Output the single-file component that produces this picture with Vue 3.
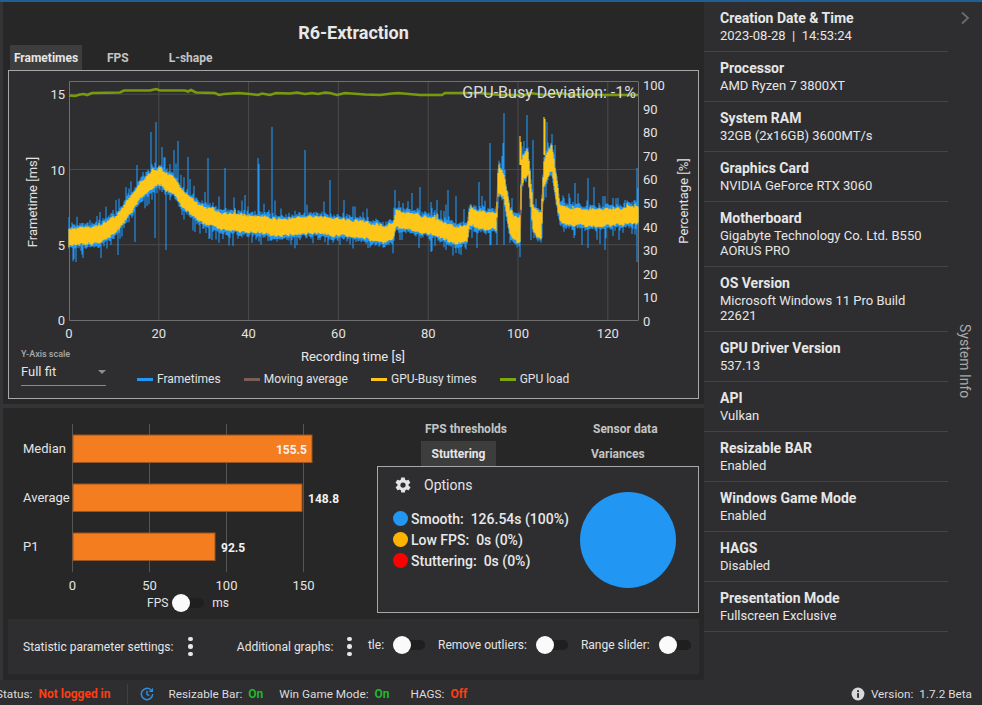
<script setup>
const keys = [[0,5.5],[5,5.6],[10,6.2],[13,7.4],[16,8.7],[20,9.6],[23,9.0],[26,7.9],[30,6.9],[35,6.5],[40,6.4],[45,6.2],[50,6.2],[55,6.3],[60,6.2],[65,6.0],[70,5.7],[72.3,5.9],[72.8,6.7],[78,6.4],[82,6.1],[86,5.6],[88.8,5.9],[89.2,6.9],[92,6.6],[95.2,6.6],[95.6,9.4],[96.8,9.0],[98.2,6.5],[99.8,6.0],[100.5,6.1],[100.8,9.8],[102.2,10.6],[103.4,6.6],[105.2,6.2],[105.7,9.6],[107.5,10.8],[109.4,7.0],[112,6.8],[126.5,6.9]]
function base(t) {
  for (let i = 1; i < keys.length; i++) {
    if (t <= keys[i][0]) {
      const [a, b] = keys[i - 1], [c, d] = keys[i]
      return b + (d - b) * (t - a) / (c - a)
    }
  }
  return 6.9
}
let seed = 12345
const rnd = () => { seed = (seed * 16807) % 2147483647; return seed / 2147483647 }
const Y = m => 320 - 15.05 * m
let blue = '', yellow = '', avg = []
const upSpikes = { 151:132,156:122,162:147,178:141,174:150,137:165,188:157,143:172,208:158,225:168,258:158,259:164,272:127,305:150,150:190,130:195,113:210,245:195,330:180,395:190,412:193,420:187,431:202,448:190,456:196,479:182,490:143,503:143,504:113,527:115,533:140,547:122,555:145,575:183,588:178,594:187,605:196,613:198,625:200,637:168 }
const downSpikes = { 76:262,101:258,118:255,135:242,155:238,166:250,195:232,212:240,230:238,262:235,300:240,320:240,340:245,368:248,389:245,400:240,419:248,431:252,446:250,477:248,491:245,497:245,504:245,510:243,531:240,574:238,582:245,588:248,600:244,605:250,619:240,637:262 }
let wob = 0
for (let x = 69; x <= 638; x++) {
  const t = (x - 69) / 4.49
  const c = base(t)
  wob = wob * 0.7 + (rnd() - 0.5) * 0.14
  const n = wob + (rnd() < 0.06 ? rnd() * 0.3 : 0)
  let h = 0.5 + rnd() * 0.12
  if (t > 95.4 && t < 109) h *= 1.5
  const yt = Y(c + h + n), yb = Y(c - h + wob)
  yellow += `M${x} ${yt.toFixed(1)}V${yb.toFixed(1)}`
  let bt = yt - 1 - rnd() * 4, bb = yb + 1 + rnd() * 4
  if (rnd() < 0.18) bt -= rnd() * 14
  if (rnd() < 0.18) bb += rnd() * 12
  if (upSpikes[x]) bt = upSpikes[x]
  if (downSpikes[x]) bb = downSpikes[x]
  blue += `M${x} ${bt.toFixed(1)}V${bb.toFixed(1)}`
  avg.push(`${x},${Y(c).toFixed(1)}`)
}
yellow += 'M520 165V136M521 165V142M544 155V117M545 155V119M161 182V167'
const greenKeys = [[69,95.5],[75,96],[80,94.5],[84,94],[87,95],[92,93],[120,92.5],[124,90.5],[150,90.5],[156,89],[160,90.5],[185,90.5],[188,91.5],[191,90],[196,92.5],[215,93],[219,95],[224,94],[238,93],[250,94],[258,95],[262,93.5],[270,95],[276,93],[290,93.5],[297,92.5],[305,94],[312,93],[318,94],[325,92.5],[330,93],[337,95],[345,93],[365,94.5],[380,95],[392,93.5],[398,93],[420,95],[442,95],[445,93],[480,93],[500,95],[525,95],[530,93],[545,95],[560,93],[572,95],[590,94],[600,95],[638,95]]
const green = greenKeys.map(p => p.join(',')).join(' ')
const gridX = [158.8, 248.6, 338.4, 428.2, 518, 607.8]
const gridY = [94.2, 169.5, 244.7]
const xLabels = [0, 20, 40, 60, 80, 100, 120]
const yLeft = [0, 5, 10, 15]
const yRight = [0, 10, 20, 30, 40, 50, 60, 70, 80, 90, 100]
const bars = [
  { label: 'Median', y: 435, w: 239, value: '155.5', inside: true },
  { label: 'Average', y: 484, w: 229, value: '148.8', inside: false },
  { label: 'P1', y: 533, w: 142, value: '92.5', inside: false },
]
const barTicks = [[72.5, '0'], [149.5, '50'], [226.5, '100'], [303.5, '150']]
const legend = [
  { c: '#2196f3', t: 'Frametimes' },
  { c: '#795f58', t: 'Moving average' },
  { c: '#fec619', t: 'GPU-Busy times' },
  { c: '#7da70e', t: 'GPU load' },
]
const info = [
  ['Creation Date & Time', '2023-08-28 \u00a0|\u00a0 14:53:24'],
  ['Processor', 'AMD Ryzen 7 3800XT'],
  ['System RAM', '32GB (2x16GB) 3600MT/s'],
  ['Graphics Card', 'NVIDIA GeForce RTX 3060'],
  ['Motherboard', 'Gigabyte Technology Co. Ltd. B550 AORUS PRO'],
  ['OS Version', 'Microsoft Windows 11 Pro Build 22621'],
  ['GPU Driver Version', '537.13'],
  ['API', 'Vulkan'],
  ['Resizable BAR', 'Enabled'],
  ['Windows Game Mode', 'Enabled'],
  ['HAGS', 'Disabled'],
  ['Presentation Mode', 'Fullscreen Exclusive'],
]
const stutter = [
  { c: '#2196f3', t: 'Smooth:\u00a0 126.54s (100%)' },
  { c: '#ffb300', t: 'Low FPS:\u00a0 0s (0%)' },
  { c: '#ff0000', t: 'Stuttering:\u00a0 0s (0%)' },
]
</script>

<template>
  <div class="app">
    <div class="topline"></div>
    <div class="body">
      <div class="edge"></div>
      <main class="main">
        <section class="upper">
          <h1 class="title">R6-Extraction</h1>
          <div class="tabs">
            <span class="tab active">Frametimes</span>
            <span class="tab fps">FPS</span>
            <span class="tab lshape">L-shape</span>
          </div>
          <div class="chartbox">
            <svg class="chart" width="690" height="275" viewBox="9 71 690 275">
              <g stroke="#4a4a4a" stroke-width="1">
                <path v-for="x in gridX" :key="x" :d="`M${x} 81V320`" />
                <path v-for="y in gridY" :key="y" :d="`M69 ${y}H638`" />
              </g>
              <path d="M69.5 81.5H638M69.5 81.5V320.5H638M638.5 81.5V320.5" fill="none" stroke="#6f6f6f" />
              <polyline :points="green" fill="none" stroke="#7a9a0c" stroke-width="2.6" />
              <path :d="blue" stroke="#2196f3" stroke-width="1.1" />
              <polyline :points="avg.join(' ')" fill="none" stroke="#795f58" stroke-width="2" />
              <path :d="yellow" stroke="#fec619" stroke-width="1.15" />
              <text x="636" y="98" text-anchor="end" class="dev">GPU-Busy Deviation: -1%</text>
              <g class="ax">
                <text v-for="m in yLeft" :key="m" x="65" :y="325 - 15.05 * m" text-anchor="end">{{ m }}</text>
                <text v-for="(l, i) in xLabels" :key="l" :x="69 + 89.8 * i" y="338" text-anchor="middle">{{ l }}</text>
                <text v-for="p in yRight" :key="p" x="643" :y="326 - 2.36 * p">{{ p }}</text>
                <text transform="translate(37 202) rotate(-90)" text-anchor="middle">Frametime [ms]</text>
                <text transform="translate(688 201) rotate(-90)" text-anchor="middle">Percentage [%]</text>
              </g>
            </svg>
            <div class="chartfoot">
              <div class="select">
                <div class="sel-label">Y-Axis scale</div>
                <div class="sel-row"><span>Full fit</span><i class="caret"></i></div>
              </div>
              <div class="foot-right">
                <div class="xtitle">Recording time [s]</div>
                <div class="legend">
                  <span v-for="l in legend" :key="l.t" class="leg">
                    <i :style="{ background: l.c }"></i>{{ l.t }}
                  </span>
                </div>
              </div>
            </div>
          </div>
        </section>
        <div class="divider"></div>
        <section class="lower">
          <div class="barcol">
            <svg class="barchart" width="366" height="184" viewBox="0 408 366 184">
              <g stroke="#555" stroke-width="1">
                <path v-for="t in barTicks" :key="t[1]" :d="`M${t[0]} 424V572`" />
              </g>
              <g v-for="b in bars" :key="b.label">
                <rect :x="73" :y="b.y" :width="b.w" height="27.5" fill="#f47d20" stroke="#9a5420" />
                <text x="23" :y="b.y + 18" class="barlabel">{{ b.label }}</text>
                <text v-if="b.inside" :x="73 + b.w - 5" :y="b.y + 19" text-anchor="end" class="barval">{{ b.value }}</text>
                <text v-else :x="73 + b.w + 6" :y="b.y + 19" class="barval">{{ b.value }}</text>
              </g>
              <text v-for="t in barTicks" :key="t[1]" :x="t[0]" y="590" text-anchor="middle" class="barlabel">{{ t[1] }}</text>
            </svg>
            <div class="unit">
              <span>FPS</span>
              <span class="toggle"><i></i></span>
              <span>ms</span>
            </div>
          </div>
          <div class="statcol">
            <div class="stattabs">
              <span class="st st1">FPS thresholds</span>
              <span class="st st2">Sensor data</span>
            </div>
            <div class="stattabs">
              <span class="st stactive">Stuttering</span>
              <span class="st st4">Variances</span>
            </div>
            <div class="statbox">
              <div class="statleft">
                <div class="options">
                  <svg width="18" height="18" viewBox="0 0 24 24"><path fill="#e4e4e4" d="M19.4 13a7.5 7.5 0 0 0 0-2l2.1-1.6a.5.5 0 0 0 .1-.7l-2-3.4a.5.5 0 0 0-.6-.2l-2.5 1a7.3 7.3 0 0 0-1.7-1l-.4-2.7a.5.5 0 0 0-.5-.4h-4a.5.5 0 0 0-.5.4l-.4 2.7a7.6 7.6 0 0 0-1.7 1l-2.5-1a.5.5 0 0 0-.6.2l-2 3.4a.5.5 0 0 0 .1.7L4.6 11a7.9 7.9 0 0 0 0 2l-2.1 1.6a.5.5 0 0 0-.1.7l2 3.4c.1.2.4.3.6.2l2.5-1c.5.4 1.1.8 1.7 1l.4 2.7c0 .2.2.4.5.4h4c.3 0 .5-.2.5-.4l.4-2.7c.6-.2 1.2-.6 1.7-1l2.5 1c.2.1.5 0 .6-.2l2-3.4a.5.5 0 0 0-.1-.7L19.4 13zM12 15.5a3.5 3.5 0 1 1 0-7 3.5 3.5 0 0 1 0 7z"/></svg>
                  <span>Options</span>
                </div>
                <div v-for="s in stutter" :key="s.t" class="stline">
                  <i :style="{ background: s.c }"></i>{{ s.t }}
                </div>
              </div>
              <div class="pie"></div>
            </div>
          </div>
        </section>
        <section class="params">
          <span class="plabel">Statistic parameter settings:</span>
          <span class="dots d1"><i></i><i></i><i></i></span>
          <span class="plabel add">Additional graphs:</span>
          <span class="dots d2"><i></i><i></i><i></i></span>
          <span class="plabel up clip">tle:</span>
          <span class="toggle up t1"><i></i></span>
          <span class="plabel up rem">Remove outliers:</span>
          <span class="toggle up t2"><i></i></span>
          <span class="plabel up ran">Range slider:</span>
          <span class="toggle up t2"><i></i></span>
        </section>
      </main>
      <aside class="side">
        <div class="sidelist">
          <div v-for="row in info" :key="row[0]" class="row">
            <div class="rt">{{ row[0] }}</div>
            <div class="rv">{{ row[1] }}</div>
          </div>
        </div>
        <div class="sidetab">
          <svg class="chev" width="10" height="14" viewBox="0 0 10 14"><path d="M2 1.5 8 7l-6 5.5" fill="none" stroke="#6b6b6b" stroke-width="1.8"/></svg>
          <span class="vert">System Info</span>
        </div>
      </aside>
    </div>
    <footer class="status">
      <span class="s-status">Status:</span>
      <b class="red login">Not logged in</b>
      <span class="sep"></span>
      <svg class="hist" width="16" height="16" viewBox="0 0 24 24"><path d="M20.5 12a8.5 8.5 0 1 1-3-6.5M12 7v5.5l3.5 2" fill="none" stroke="#2f8fe0" stroke-width="2.2"/><path d="M21 2.5V9h-6.5z" fill="#2f8fe0"/></svg>
      <span class="s-a">Resizable Bar:</span><b class="green">On</b>
      <span class="s-b">Win Game Mode:</span><b class="green">On</b>
      <span class="s-c">HAGS:</span><b class="red off">Off</b>
      <span class="grow"></span>
      <svg width="14" height="14" viewBox="0 0 24 24"><circle cx="12" cy="12" r="11" fill="#d8d8d8"/><rect x="10.5" y="10.5" width="3.2" height="8" fill="#2e2e30"/><rect x="10.5" y="5.5" width="3.2" height="3.2" fill="#2e2e30"/></svg>
      <span class="s-v">Version:</span><span class="s-n">1.7.2 Beta</span>
    </footer>
  </div>
</template>

<style>
html, body { margin: 0; background: #2e2e30; overflow: hidden; }
</style>

<style scoped>
.app {
  width: 982px; height: 705px; display: flex; flex-direction: column;
  font-family: Roboto, "Liberation Sans", sans-serif; color: #e4e4e4;
  background: #2e2e30; overflow: hidden;
}
.topline { height: 2px; background: #1f5f96; flex: none; }
.body { height: 678px; display: flex; flex: none; }
.edge { width: 3px; background: #343436; flex: none; }
.main { width: 701px; background: #272727; display: flex; flex-direction: column; flex: none; }
.upper { height: 402px; flex: none; }
.title { margin: 0; height: 43px; padding-top: 20px; box-sizing: border-box; line-height: 22px; text-align: center; font-size: 18px; font-weight: 700; color: #e8e8e8; width: 701px; }
.tabs { display: flex; height: 25px; padding-left: 7px; font-size: 12px; font-weight: 700; color: #c4c4c4; }
.tab { line-height: 27px; }
.tab.active { width: 72px; text-align: center; background: #3d3d3d; color: #e6e6e6; }
.fps { margin-left: 25px; }
.lshape { margin-left: 40px; }
.chartbox { margin-left: 5px; width: 689px; height: 327px; border: 1px solid #a8a8a8; background: #2e2e30; }
.chart { display: block; }
.dev { font-size: 16px; fill: #dcdcdc; }
.ax text { font-size: 13px; fill: #e2e2e2; }
.chartfoot { display: flex; height: 52px; }
.select { width: 85px; margin-left: 12px; flex: none; }
.sel-label { font-size: 9px; color: #a9a9a9; line-height: 11px; margin-top: 3px; font-weight: 500; }
.sel-row { display: flex; justify-content: space-between; align-items: center; font-size: 13px; border-bottom: 1px solid #8a8a8a; padding-bottom: 2px; box-sizing: border-box; height: 26px; }
.caret { width: 0; height: 0; border-left: 4px solid transparent; border-right: 4px solid transparent; border-top: 4px solid #8d8d8d; }
.foot-right { flex: 1; margin-left: 31px; }
.xtitle { font-size: 13px; line-height: 15px; text-align: center; width: 432px; margin-top: 3px; color: #e8e8e8; }
.legend { display: flex; font-size: 12px; margin-top: 7px; line-height: 16px; color: #e2e2e2; }
.leg { display: inline-flex; align-items: center; margin-right: 23px; white-space: nowrap; }
.leg i { width: 16px; height: 3px; margin-right: 4px; }
.divider { height: 4px; background: #343436; flex: none; }
.lower { height: 211px; display: flex; flex: none; }
.barcol { width: 377px; flex: none; margin-left: -3px; }
.barchart { display: block; }
.barlabel { font-size: 13px; fill: #e4e4e4; }
.barval { font-size: 12px; font-weight: 700; fill: #f2f2f2; }
.unit { display: flex; align-items: center; gap: 4px; font-size: 12px; height: 22px; padding-left: 147px; }
.unit span:last-child { margin-left: 4px; }
.toggle { width: 32px; height: 10px; background: #1f1f1f; border-radius: 5px; position: relative; display: inline-block; flex: none; }
.toggle i { position: absolute; left: 0; top: -4px; width: 18px; height: 18px; border-radius: 50%; background: #fafafa; }
.statcol { width: 322px; flex: none; padding-top: 8px; }
.stattabs { display: flex; height: 25px; font-size: 12px; font-weight: 700; color: #c4c4c4; line-height: 26px; }
.st { white-space: nowrap; }
.st1 { margin-left: 48px; }
.st2 { margin-left: 86px; }
.stactive { margin-left: 44px; width: 75px; text-align: center; background: #3d3d3d; color: #e6e6e6; }
.st4 { margin-left: 95px; }
.statbox { box-sizing: border-box; height: 147px; border: 1px solid #a8a8a8; background: #2e2e30; display: flex; }
.statleft { width: 203px; flex: none; padding: 9px 0 0 15px; box-sizing: border-box; }
.options { display: flex; align-items: center; gap: 12px; font-size: 14px; height: 18px; margin: 0 0 14px 1px; }
.stline { display: flex; align-items: center; height: 21px; font-size: 14px; font-weight: 500; white-space: nowrap; color: #e8e8e8; }
.stline i { width: 15px; height: 15px; border-radius: 50%; margin-right: 3px; flex: none; }
.pie { width: 96px; height: 96px; border-radius: 50%; background: #2196f3; margin: 25px 0 0 -1px; flex: none; }
.params { margin-left: 5px; width: 691px; height: 55px; flex: none; background: #2e2e30; display: flex; align-items: center; font-size: 12px; box-sizing: border-box; padding-left: 15px; white-space: nowrap; }
.dots { display: inline-flex; flex-direction: column; gap: 3px; }
.dots i { width: 4.5px; height: 4.5px; border-radius: 50%; background: #e8e8e8; }
.d1 { margin-left: 15px; }
.add { margin-left: 44px; }
.d2 { margin-left: 14px; }
.up { position: relative; top: -2px; }
.clip { margin-left: 16px; }
.t1 { margin-left: 9px; }
.t2 { margin-left: 9px; }
.rem { margin-left: 13px; }
.ran { margin-left: 13px; }
.side { flex: 1; display: flex; background: #2e2e30; }
.sidelist { width: 244px; flex: none; }
.row { padding: 7px 0 8px 16px; border-bottom: 1px solid #444446; }
.rt { font-size: 14px; font-weight: 700; line-height: 18px; color: #e6e6e6; }
.rv { font-size: 13px; line-height: 15px; color: #e6e6e6; width: 215px; margin-top: 1px; }
.sidetab { flex: 1; display: flex; flex-direction: column; align-items: center; }
.chev { margin-top: 9px; }
.vert { writing-mode: vertical-rl; font-size: 14px; color: #a9a9a9; margin-top: 299px; }
.status { height: 25px; flex: none; display: flex; align-items: center; font-size: 11.75px; white-space: nowrap; color: #dcdcdc; margin-left: -4px; padding-top: 2px; box-sizing: border-box; }
.status b { font-weight: 700; font-size: 12px; }
.red { color: #ff3d12; }
.green { color: #22b52a; margin-left: 6px; }
.login { margin-left: 6px; }
.sep { width: 1px; height: 20px; background: #404042; margin-left: 16px; }
.hist { margin-left: 11px; }
.s-a { margin-left: 14px; }
.s-b { margin-left: 16px; }
.s-c { margin-left: 21px; }
.off { margin-left: 6px; }
.grow { flex: 1; }
.s-v { margin-left: 6px; }
.s-n { margin-left: 6px; margin-right: 10px; }
</style>
